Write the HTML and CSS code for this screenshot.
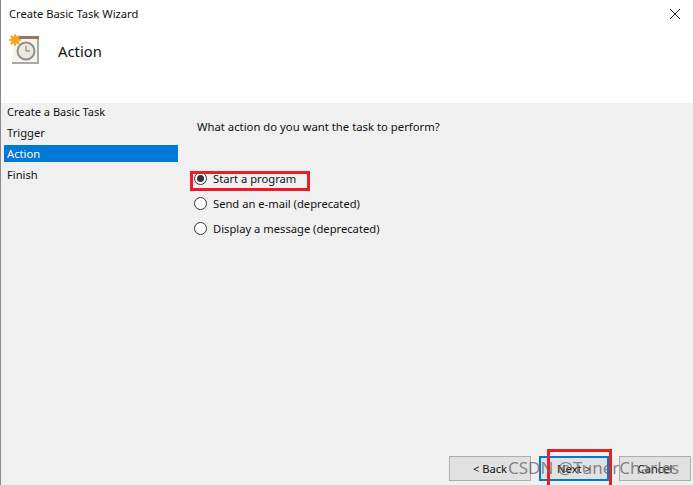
FILE: index.html
```html
<!DOCTYPE html>
<html lang="en">
<head>
    <meta charset="UTF-8">
    <title>Create Basic Task Wizard</title>
    <link rel="stylesheet" href="styles.css">
</head>
<body>

<div class="wizard">
    <div class="header">
        <div class="titlebar">
            <span class="title">Create Basic Task Wizard</span>
            <svg class="close" width="12" height="12" viewBox="0 0 12 12">
                <path d="M1 1 L11 11 M11 1 L1 11" stroke="#222" stroke-width="1" fill="none"/>
            </svg>
        </div>
        <div class="heading">
            <svg class="task-icon" width="34" height="38" viewBox="0 0 34 38">
                <path d="M10 4 H32 V7 H10 Z" fill="#9b7560"/>
                <path d="M9 7 H31 V30 H5 L7 12 Z" fill="#f6f3ea"/>
                <path d="M30 7 H32 V32 H5 V30 H30 Z" fill="#a9a9a9"/>
                <circle cx="19" cy="19" r="8.5" fill="#ece8da" stroke="#8f8f8f" stroke-width="2"/>
                <path d="M19 14 V19 H23" stroke="#777" stroke-width="1" fill="none"/>
                <path d="M8 1 L9.5 4.5 L13 3 L11.5 6.5 L15 8 L11.5 9.5 L13 13 L9.5 11.5 L8 15 L6.5 11.5 L3 13 L4.5 9.5 L1 8 L4.5 6.5 L3 3 L6.5 4.5 Z" fill="#f5a81c"/>
            </svg>
            <span class="heading-text">Action</span>
        </div>
    </div>

    <div class="main">
        <ul class="steps">
            <li>Create a Basic Task</li>
            <li>Trigger</li>
            <li class="active">Action</li>
            <li>Finish</li>
        </ul>
        <div class="content">
            <p class="question">What action do you want the task to perform?</p>
            <div class="options">
                <div class="option"><span class="radio checked"></span>Start a program</div>
                <div class="option"><span class="radio"></span>Send an e-mail (deprecated)</div>
                <div class="option"><span class="radio"></span>Display a message (deprecated)</div>
            </div>
        </div>
    </div>

    <div class="buttons">
        <button class="btn back">&lt; Back</button>
        <button class="btn next">Next &gt;</button>
        <button class="btn cancel">Cancel</button>
    </div>
</div>

<!-- annotations on top of the screenshot -->
<div class="mark mark-radio"></div>
<div class="mark mark-next"></div>
<div class="watermark">CSDN @TunerCharles</div>

</body>
</html>
```

FILE: styles.css
```css
* {
    box-sizing: border-box;
}
html, body {
    margin: 0;
    height: 100%;
    overflow: hidden;
}
body {
    font-family: "Noto Sans", sans-serif;
    font-size: 11.2px;
    color: #111;
    background: #f0f0f0;
    position: relative;
}
.wizard {
    height: 485px;
    display: flex;
    flex-direction: column;
    border-left: 1px solid #8a8a8a;
}
.header {
    height: 103px;
    background: #fff;
    flex: none;
}
.titlebar {
    display: flex;
    justify-content: space-between;
    align-items: center;
    height: 27px;
    padding: 0 12px 0 8px;
}
.heading {
    display: flex;
    align-items: center;
    padding: 5px 0 0 6px;
}
.task-icon {
    flex: none;
}
.heading-text {
    font-size: 14.8px;
    margin-left: 17px;
}
.main {
    flex: 1;
    display: flex;
}
.steps {
    list-style: none;
    margin: 0;
    padding: 0 0 0 3px;
    width: 177px;
    flex: none;
}
.steps li {
    height: 17px;
    margin-bottom: 4px;
    padding-left: 3px;
    line-height: 17px;
}
.steps li:first-child {
    font-size: 11.05px;
}
.steps .active {
    background: #0078d7;
    color: #fff;
}
.content {
    padding: 15px 0 0 19px;
}
.question {
    margin: 0 0 30px;
    font-size: 11.3px;
    line-height: 18px;
}
.option {
    display: flex;
    align-items: center;
    height: 25px;
    margin-left: -3px;
}
.radio {
    width: 13px;
    height: 13px;
    border: 1px solid #333;
    border-radius: 50%;
    background: #fff;
    margin-right: 6px;
    display: flex;
    align-items: center;
    justify-content: center;
}
.radio.checked::after {
    content: "";
    width: 7px;
    height: 7px;
    border-radius: 50%;
    background: #333;
}
.buttons {
    flex: none;
    display: flex;
    justify-content: flex-end;
    gap: 8px;
    padding: 0 2px 4px 0;
}
.btn {
    height: 25px;
    font: inherit;
    color: #111;
    background: #e1e1e1;
    border: 1px solid #adadad;
    padding: 0;
}
.back {
    width: 82px;
}
.next {
    width: 70px;
    border: 2px solid #0078d7;
}
.cancel {
    width: 72px;
    margin-left: 2px;
}
.mark {
    position: absolute;
    border: 3px solid #ed1c24;
}
.mark-radio {
    left: 190px;
    top: 171px;
    width: 120px;
    height: 20px;
}
.mark-next {
    left: 547px;
    top: 449px;
    width: 65px;
    height: 40px;
}
.watermark {
    position: absolute;
    left: 508px;
    top: 458px;
    font-size: 17px;
    line-height: 20px;
    white-space: nowrap;
    color: rgba(100, 100, 100, 0.75);
}
```
